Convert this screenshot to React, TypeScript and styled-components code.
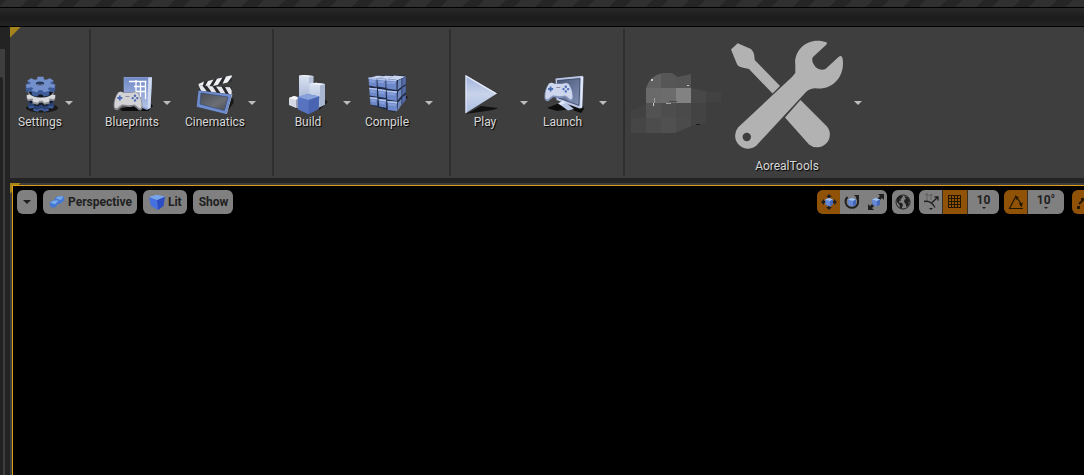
import React from "react";
import styled, { createGlobalStyle, css } from "styled-components";

const GlobalStyle = createGlobalStyle`
  *, *::before, *::after { box-sizing: border-box; }
  body {
    margin: 0;
    background: #232323;
    font-family: Roboto, "Liberation Sans", sans-serif;
    font-size: 12px;
    overflow: hidden;
  }
`;

/* ---------- window frame ---------- */

const Window = styled.div`
  display: flex;
  flex-direction: column;
  height: 100vh;
`;

const HatchStrip = styled.div`
  flex: none;
  height: 8px;
  border-bottom: 1px solid #000;
  background: repeating-linear-gradient(
    135deg,
    #252525 0,
    #252525 4px,
    #303030 5px,
    #303030 19px,
    #252525 20px,
    #252525 26px
  );
`;

const TitleBar = styled.header`
  flex: none;
  height: 19px;
  border-bottom: 1px solid #000;
  background: linear-gradient(#292929, #1b1b1b 55%, #232323);
`;

const Workspace = styled.div`
  flex: 1;
  min-height: 0;
  display: flex;
`;

const SidePanel = styled.aside`
  flex: none;
  display: flex;
  width: 5px;
  margin: 22px 5px 0 0;
  padding: 28px 2px 0 0;
  background: #3e3e3e;
`;

const SidePanelBody = styled.div`
  flex: 1;
  border-top-right-radius: 3px;
  background: #222;
`;

const Main = styled.main`
  flex: 1;
  min-width: 0;
  display: flex;
  flex-direction: column;
  gap: 5px;
`;

/* A folded yellow corner marks a docked panel */
const cornerMark = css`
  background-color: #3e3e3e;
  background-image: linear-gradient(135deg, #a6841c 7px, transparent 8px);
  background-repeat: no-repeat;
`;

/* ---------- toolbar ---------- */

const Toolbar = styled.nav`
  ${cornerMark}
  flex: none;
  display: flex;
  padding: 2px 0;
  overflow: hidden;
`;

const Section = styled.div<{ $lead: number; $gap: number }>`
  flex: none;
  display: flex;
  align-items: center;
  gap: ${(p) => p.$gap}px;
  padding: 2px 15px 2px ${(p) => p.$lead}px;
  & + & { border-left: 2px solid #2e2e2e; }
`;

const Entry = styled.div`
  display: flex;
  align-items: center;
  gap: 2px;
`;

const bareButton = css`
  border: 0;
  padding: 0;
  background: none;
  font: inherit;
  cursor: pointer;
`;

const ToolButton = styled.button<{ $width: number }>`
  ${bareButton}
  display: flex;
  flex-direction: column;
  align-items: center;
  width: ${(p) => p.$width}px;
  color: #d8d8d8;
  line-height: 15px;
  white-space: nowrap;
  text-shadow: 1px 1px 1px #000;
  svg { display: block; flex: none; overflow: visible; }
`;

const MenuButton = styled.button`
  ${bareButton}
  display: flex;
  justify-content: center;
  align-items: center;
  width: 10px;
  height: 40px;
  color: #bdbdbd;
`;

/* ---------- viewport ---------- */

const Viewport = styled.section`
  ${cornerMark}
  flex: 1;
  min-height: 0;
  display: flex;
  padding: 2px 0 0 2px;
`;

const Scene = styled.div`
  flex: 1;
  min-width: 0;
  border: solid #e09c14;
  border-width: 1px 0 0 1px;
  background: #000;
`;

const ViewportBar = styled.div`
  display: flex;
  justify-content: space-between;
  padding: 4px 0 0 4px;
  overflow: hidden;
`;

const LeftTools = styled.div`
  display: flex;
  gap: 6px;
`;

const RightTools = styled.div`
  display: flex;
  gap: 5px;
`;

const Pill = styled.button`
  ${bareButton}
  display: flex;
  align-items: center;
  gap: 3px;
  min-width: 20px;
  height: 24px;
  padding: 0 5px 0 6px;
  border-radius: 6px;
  background: #808080;
  color: #1f1f1f;
  font-weight: 700;
  svg { flex: none; }
`;

const Group = styled.div<{ $gap?: number; $before?: number; $cut?: boolean }>`
  display: flex;
  gap: ${(p) => p.$gap ?? 0}px;
  height: 24px;
  margin-left: ${(p) => p.$before ?? 0}px;
  border-radius: ${(p) => (p.$cut ? "6px 0 0 6px" : "6px")};
  background: #3a3020;
  overflow: hidden;
`;

const GroupButton = styled.button<{ $width: number; $active?: boolean }>`
  ${bareButton}
  display: flex;
  flex-direction: column;
  align-items: center;
  justify-content: center;
  width: ${(p) => p.$width}px;
  background: ${(p) => (p.$active ? "#8f5206" : "#808080")};
  color: #1f1f1f;
  font-weight: 700;
  line-height: 14px;
  svg { display: block; flex: none; }
`;

/* ---------- small glyphs ---------- */

const Caret = () => (
  <svg width="8" height="4" viewBox="0 0 8 4" aria-hidden>
    <path d="M0 0h8L4 4z" fill="currentColor" />
  </svg>
);

const MiniCaret = () => (
  <svg width="6" height="4" viewBox="0 0 6 4" aria-hidden>
    <path d="M1 0h4L3 2z" fill="#1f1f1f" />
  </svg>
);

/* ---------- toolbar icons ---------- */

function gearPath(cx: number, cy: number, rx: number, ry: number, teeth = 7) {
  const step = (Math.PI * 2) / teeth;
  const points: string[] = [];
  for (let i = 0; i < teeth; i++) {
    [
      [-0.34, 0.7],
      [-0.24, 1],
      [0.24, 1],
      [0.34, 0.7],
    ].forEach(([t, r]) => {
      const a = (i + t + 0.25) * step;
      points.push(`${(cx + Math.cos(a) * rx * r).toFixed(2)} ${(cy + Math.sin(a) * ry * r).toFixed(2)}`);
    });
  }
  return `M${points.join("L")}Z`;
}

const SettingsIcon = () => (
  <svg width="40" height="40" viewBox="0 0 40 40" aria-hidden>
    <ellipse cx="22" cy="33" rx="16" ry="4.500" fill="#141414" opacity=".85" />
    {[31, 30, 29, 28, 27].map((y) => (
      <path key={y} d={gearPath(21, y, 13, 6)} fill={y > 29 ? "#3f5e9c" : "#2b4272"} />
    ))}
    <path d={gearPath(21, 26, 12, 5.5)} fill="#131926" />
    {[23, 22, 21, 20].map((y) => (
      <path key={y} d={gearPath(21, y, 14.5, 7)} fill={y > 21 ? "#8f9196" : "#d9dade"} />
    ))}
    <ellipse cx="21" cy="17" rx="12" ry="5.500" fill="#12151c" />
    {[14, 13, 12, 11].map((y) => (
      <path key={y} d={gearPath(20.5, y, 15, 8)} fill="#3f5d98" />
    ))}
    <path d={gearPath(20.5, 9.5, 15, 8)} fill="#7390cc" />
    <ellipse cx="20" cy="8.500" rx="4.200" ry="2" fill="#293957" />
    <path d="M16.500 9.300q3.500 2 7 0" stroke="#8fa9dc" strokeWidth=".7" fill="none" />
  </svg>
);

const Gamepad = ({ light, shade }: { light: string; shade: string }) => (
  <g>
    <path
      d="M5 1.500C6.500 .3 9 .4 10.500 1.600H19C21 .3 24 .6 25.500 2.500C28 6 29.500 11 29.500 16C29.500 20 26 20.500 24 17.500L21 15.200C18 16.200 12.500 16.200 9.800 15L6.500 17.500C4.500 20.500 .7 19.500 .6 15.500C.5 10.500 2 5 5 1.500Z"
      fill={shade}
    />
    <path
      d="M5.500 1.500C7 .5 9 .6 10.500 1.900H19C21 .8 23.500 1 25 2.600C27 5.500 28.500 10 28.600 14.500C28.500 18 26 18.200 24.400 15.600L21.500 13.500C18 14.500 12.500 14.500 9.500 13.300L6 15.500C4 18.200 1.500 17.500 1.500 14.500C1.600 10 2.800 5 5.500 1.500Z"
      fill={light}
    />
    <path d="M6.800 4.500v5M4.300 7h5" stroke="#4c6cb4" strokeWidth="1.800" />
    <g fill="#4c6cb4">
      <circle cx="22" cy="4.800" r="1.200" />
      <circle cx="22" cy="9.400" r="1.200" />
      <circle cx="19.700" cy="7.100" r="1.200" />
      <circle cx="24.300" cy="7.100" r="1.200" />
    </g>
    <path d="M12.500 5.500h4" stroke="#8c919d" strokeWidth="1" />
  </g>
);

const BlueprintsIcon = () => (
  <svg width="40" height="40" viewBox="0 0 40 40" aria-hidden>
    <defs>
      <linearGradient id="sheet" x1="0" y1="0" x2="0" y2="1">
        <stop offset="0" stopColor="#7088c6" />
        <stop offset="1" stopColor="#b3c2e6" />
      </linearGradient>
    </defs>
    <path d="M8 34L36 26L41 31L36 36H10Z" fill="#0d0d0d" />
    <path d="M11.700 2H40L38.500 33L35 35L11.700 25Z" fill="#8ea4d6" />
    <path d="M12.300 2.500H36.300L35.500 33L12.300 25Z" fill="url(#sheet)" />
    <path d="M36.300 2.500H40L38.500 33L35.500 34Z" fill="#cfd9f0" />
    <path
      d="M17 6.500H34.500M33.500 6.500V24M22 11.500H34M24 16.500H34M24 5V19M28.500 6.500V22"
      stroke="#fff"
      strokeWidth="1.300"
      fill="none"
    />
    <g transform="translate(1 16)">
      <Gamepad light="#d3d3d6" shade="#87878b" />
    </g>
  </svg>
);

const CinematicsIcon = () => (
  <svg width="40" height="40" viewBox="0 0 40 40" aria-hidden>
    <defs>
      <linearGradient id="slate" x1="0" y1="0" x2="1" y2="1">
        <stop offset="0" stopColor="#484b52" />
        <stop offset=".6" stopColor="#6c6f76" />
        <stop offset="1" stopColor="#484b50" />
      </linearGradient>
    </defs>
    <path d="M31 38L38.500 28V24L35 22Z" fill="#171717" />
    <path d="M4.500 8L36.500 .2L37 6.500L6 14.500Z" fill="#2c2d31" />
    <path
      d="M3.500 9L9 6.500L7 13.500L5 14.500ZM13 6L18.500 4.600L14 12L9 13.200ZM22 3.800L27.500 2.400L23 9.800L18 11ZM31 1.500L36.500 .2L37 1.500L32.500 7.500L27.500 8.700Z"
      fill="#f0f1f5"
    />
    <path d="M4.500 10.500L36.700 12V19.500L4 15.500Z" fill="#292a2e" />
    <path
      d="M3.500 10L7.500 10.700L12 16.500L6 15.800ZM12 11L17.500 11.200L21.500 17.500L16.500 17ZM21 11.400L26.500 11.700L30.500 18.700L25.500 18.100ZM30 12L35 12.200L36.700 15.500V19.500L34 19.200Z"
      fill="#e6e8ee"
    />
    <path d="M3.500 15.500L36.500 19.500L31 39L1.700 31.700Z" fill="#6e8cd0" />
    <path d="M36.500 19.500L37.500 19L32 38.500L31 39Z" fill="#a9bce6" />
    <path d="M6 18L33 22L29.300 35.500L5 29Z" fill="url(#slate)" stroke="#3a4a70" strokeWidth=".7" />
  </svg>
);

const BuildIcon = () => (
  <svg width="40" height="40" viewBox="0 0 40 40" aria-hidden>
    <defs>
      <linearGradient id="tower" x1="0" y1="0" x2="0" y2="1">
        <stop offset="0" stopColor="#dce4f2" />
        <stop offset="1" stopColor="#a5b4d6" />
      </linearGradient>
    </defs>
    <path d="M30 36L40 27L36 24Z" fill="#1a1a1a" />
    <path d="M11 .5L16 0L25.300 1V25H11Z" fill="url(#tower)" />
    <path d="M21 1.800L25.300 1V25H21Z" fill="#b4c0d8" />
    <path d="M11 .5L16 0L25.300 1L21 1.800Z" fill="#f3f6fb" />
    <path d="M21.300 8.700L28 7.800L37 9V29.500L30 33L21.300 30Z" fill="url(#tower)" />
    <path d="M32 10.200L37 9V29.500L32 32Z" fill="#a9b6d2" />
    <path d="M21.300 8.700L28 7.800L37 9L32 10.200Z" fill="#edf2fa" />
    <path d="M1 23L6 21L11 22.500V31L8 33L1 30Z" fill="#d5dae5" />
    <path d="M1 23L6 21L11 22.500L8 25Z" fill="#f6f7fa" />
    <path d="M8 25L11 23V33H8Z" fill="#9aa2b3" />
    <path d="M9.700 22L20 19L31.300 21.500L30.500 34L20.500 39.300L10 34.500Z" fill="#5873c0" />
    <path d="M9.700 22L20 19L31.300 21.500L20.800 25Z" fill="#86a0dc" />
    <path d="M20.800 25L31.300 21.500L30.500 34L20.500 39.300Z" fill="#4964b0" />
  </svg>
);

const frontCubes = [0, 1, 2].flatMap((row) =>
  [0, 1, 2].map((col) => ({
    x: [1.5, 10.3, 19][col] + row * 0.7,
    y: [2.5, 12.7, 22][row] + col * (0.8 + row * 0.6),
    w: [8.2, 8.2, 10.5][col] - row * 0.4,
    h: [8.6, 8.2, 8][row] + (col === 2 ? 1.4 : 0),
  })),
);

const CompileIcon = () => (
  <svg width="40" height="40" viewBox="0 0 40 40" aria-hidden>
    <path d="M26 38L41 22L37 20Z" fill="#151515" />
    <path d="M2 3L12 .5H38L39 24L26 37L4 30Z" fill="#202c46" />
    <path d="M2 3L10 .7L17 1L11 3.600ZM11.500 3.600L18 .8L26 1L21 4ZM21 4.200L27 .6L38.500 1.500L31 5Z" fill="#c9d5f0" />
    {[0, 1, 2].map((row) => (
      <g key={row}>
        <path d={`M31 ${5.5 + row * 11}L34.500 ${3.7 + row * 10}V${11.7 + row * 9}L30.500 ${15 + row * 10.5}Z`} fill="#7088c0" />
        <path d={`M35.200 ${3.2 + row * 9.5}L38.800 ${1.7 + row * 9}V${9 + row * 8}L35.200 ${11.5 + row * 9}Z`} fill="#536ca9" />
      </g>
    ))}
    {frontCubes.map(({ x, y, w, h }) => (
      <g key={`${x}-${y}`}>
        <path d={`M${x} ${y}L${x + w} ${y + 0.8}V${y + h + 0.8}L${x + 0.5} ${y + h - 0.5}Z`} fill="#6d89cb" />
        <path d={`M${x} ${y}L${x + w} ${y + 0.8}V${y + 2.4}L${x} ${y + 1.5}Z`} fill="#b4c5ec" />
        <path d={`M${x + 1} ${y + 2.5}L${x + w - 1.5} ${y + 3}V${y + 5}L${x + 1} ${y + 4.5}Z`} fill="#88a0d9" />
      </g>
    ))}
  </svg>
);

const PlayIcon = () => (
  <svg width="40" height="40" viewBox="0 0 40 40" aria-hidden>
    <defs>
      <linearGradient id="play" x1="0" y1="0" x2="0" y2="1">
        <stop offset="0" stopColor="#9eafdb" />
        <stop offset=".5" stopColor="#c9d4ea" />
        <stop offset="1" stopColor="#acbce2" />
      </linearGradient>
    </defs>
    <path d="M1 39L16 31L33.500 33L28 35Z" fill="#121212" />
    <path d="M.5 0L32 18.500L.5 38.300Z" fill="url(#play)" />
    <path d="M.5 0L32 18.500L30 18.700L1.500 2V37.700L.5 38.300Z" fill="#e8eefb" />
  </svg>
);

const LaunchIcon = () => (
  <svg width="40" height="40" viewBox="0 0 40 40" aria-hidden>
    <defs>
      <linearGradient id="screen" x1="0" y1="0" x2="1" y2="1">
        <stop offset="0" stopColor="#465373" />
        <stop offset="1" stopColor="#8493b8" />
      </linearGradient>
    </defs>
    <path d="M4 33L14 29L24 30L40 31L41 34L38 38L27 34L14 36Z" fill="#0d0d0d" />
    <path d="M12.500 3.500L39.500 .8L40.500 2L39.300 33L36.500 33.500L13.500 25Z" fill="#b9c6e6" />
    <path d="M14.500 5.500L37 3.500L36 30.500L15 22.800Z" fill="url(#screen)" stroke="#333f5a" strokeWidth=".8" />
    <path d="M38 2L40 1.800L38.800 32.500L37.200 32.700Z" fill="#e3eafa" />
    <path d="M15.300 28.500L20 25.500L31 34L25 35.500Z" fill="#b7c6e4" />
    <path d="M15.300 28.500L20 25.500L23 27.800L18 30Z" fill="#dde6f6" />
    <g transform="translate(.8 7)">
      <Gamepad light="#cdd6ec" shade="#8292ba" />
    </g>
  </svg>
);

const ToolsIcon = () => (
  <svg width="128" height="128" viewBox="0 0 128 128" fill="#b2b2b2" aria-hidden>
    <path d="M8 18.500L14.700 12.300L28 18Q31 21 31.200 24L31.700 29L57 55L49.500 62.500L26 38L19 36.500Q14.500 35.500 13.500 32Z" />
    <path d="M77.500 69L104 95.500A12.800 12.800 0 0 1 86 113.500L62 86.500Z" />
    <path
      fillRule="evenodd"
      d="M104 11.500C86 5 70.500 18 72.300 34.500V42L69 46L15 96.500A13 13 0 0 0 33 115L83 61Q88 56.500 95 57.500C112 58 122.500 43 119.500 27Q118.500 23.500 115.500 26L102.500 38Q98 40 93 36.500Q87.500 30 90 26L103.500 13.500ZM28 106A4.200 4.200 0 1 1 19.600 106A4.200 4.200 0 1 1 28 106Z"
    />
  </svg>
);

/* Pixelated plug-in thumbnail: rows of 15px tiles with a rounded silhouette */
const tiles: [number, number, string][] = [
  [15, 5, "#616161"], [30, 5, "#565656"], [45, 5, "#545454"],
  [15, 20, "#6a6a6a"], [30, 20, "#6c6c6c"], [45, 20, "#828282"], [60, 20, "#484848"],
  [0, 35, "#424242"], [15, 35, "#525252"], [30, 35, "#4d4d4d"], [45, 35, "#4a4a4a"], [60, 35, "#434343"],
  [0, 50, "#464646"], [15, 50, "#4c4c4c"], [30, 50, "#505050"], [45, 50, "#4b4b4b"], [60, 50, "#434343"],
];

const MosaicIcon = () => (
  <svg width="90" height="70" viewBox="0 0 90 70" aria-hidden>
    <defs>
      <clipPath id="blob">
        <path d="M0 43L15 36V20Q19 7 32 5H41L47 9L60 6V20L75 24V56L63 57L44 65H0Z" />
      </clipPath>
    </defs>
    <path d="M60 21Q75 20 78 24H90V34H76L70 50H60Z" fill="#424242" />
    <g clipPath="url(#blob)" shapeRendering="crispEdges">
      {tiles.map(([x, y, fill]) => (
        <rect key={`${x}-${y}`} x={x} y={y} width="15" height="15" fill={fill} />
      ))}
    </g>
    <path d="M20 11h2v2h-2zM56 17h2v1h-2zM22 35h1v3h-1z" fill="#c8c8c8" />
    <path d="M23 30h1v5h-1zM35 35h5v1h-5z" fill="#a0a0a0" />
    <path d="M38 33h8v1h-8z" fill="#484848" />
    <path d="M65 56h4v1h-4z" fill="#1c1c1c" />
  </svg>
);

/* ---------- viewport icons ---------- */

const PerspectiveIcon = () => (
  <svg width="16" height="16" viewBox="0 0 16 16" aria-hidden>
    <path d="M1 8L5 6L7 3L10 2L14.500 2.500L15.500 6L12 9.500L9 10L6 13.500L2 13.500L.8 11Z" fill="#4677d2" />
    <path d="M1 8.500L5 6.500H9.500L6 10.300Z" fill="#7aaeee" />
    <path d="M6.500 4.500L9.500 2.200L14.500 2.500L12 6Z" fill="#74a8ec" />
  </svg>
);

const LitIcon = () => (
  <svg width="16" height="16" viewBox="0 0 16 16" aria-hidden>
    <path d="M0 3L8 6L9 16L2 12Z" fill="#4470e2" />
    <path d="M8 6L16 2.500L14.500 12L9 16Z" fill="#2b4cc4" />
    <path d="M0 3L7.500 .8L16 2.500L8 6Z" fill="#78a6ee" />
  </svg>
);

const Cube = ({ x, y }: { x: number; y: number }) => (
  <g transform={`translate(${x} ${y})`}>
    <path d="M0 1.500L4 0L8 1.500V6.500L5 8.500L.5 7Z" fill="#6288d6" />
    <path d="M0 1.500L4 0L8 1.500L5 3Z" fill="#a3c0f0" />
    <path d="M5 3L8 1.500V6.500L5 8.500Z" fill="#4768b8" />
  </g>
);

const MoveIcon = () => (
  <svg width="16" height="16" viewBox="0 0 16 16" aria-hidden>
    <path
      d="M8 0L11 3H9V5H7V3H5ZM8 16L5 13H7V11H9V13H11ZM0 8L3 5V7H5V9H3V11ZM16 8L13 11V9H11V7H13V5Z"
      fill="#1f1f1f"
    />
    <Cube x={4} y={4} />
  </svg>
);

const RotateIcon = () => (
  <svg width="16" height="16" viewBox="0 0 16 16" aria-hidden>
    <path d="M3.500 3A6.300 6.300 0 1 0 12.500 3.300" fill="none" stroke="#1f1f1f" strokeWidth="2" />
    <path d="M10 1H15V6Z" fill="#1f1f1f" />
    <Cube x={4} y={4} />
  </svg>
);

const ScaleIcon = () => (
  <svg width="16" height="16" viewBox="0 0 16 16" aria-hidden>
    <path d="M10 0H16V6L14 4L11 7L9 5L12 2ZM0 10L2 12L5 9L7 11L4 14L6 16H0Z" fill="#1f1f1f" />
    <Cube x={4} y={4} />
  </svg>
);

const GlobeIcon = () => (
  <svg width="16" height="16" viewBox="0 0 16 16" aria-hidden>
    <circle cx="8" cy="8" r="7" fill="none" stroke="#1f1f1f" strokeWidth="1" />
    <path
      d="M2 4L5 1.500L8 2L7 4L5.500 5L6 7L4.500 6.500L4 8.500L7 9L8 11L6.500 14.500L5 14L4.500 11L2 8ZM9.500 2L13 3.500L15 7.500L13.500 8L14 11L11.500 13L10.500 9.500L9 8L9.500 5.500L11.500 5L10 4Z"
      fill="#1f1f1f"
    />
  </svg>
);

const SurfaceSnapIcon = () => (
  <svg width="16" height="20" viewBox="0 0 16 20" aria-hidden>
    <path d="M4 9V1.500M2.500 3.500L4 1.500L5.500 3.500M8 8V2.500M6.500 4L8 2L9.500 4" fill="none" stroke="#5e5e5e" />
    <path d="M1 9.500Q8 8 12 15.500M9 10.500L15 5M11.500 5H15V8.500" fill="none" stroke="#1f1f1f" strokeWidth="1.300" />
    <path d="M6 16h4L8 18z" fill="#1f1f1f" />
  </svg>
);

const GridIcon = () => (
  <svg width="14" height="14" viewBox="0 0 14 14" aria-hidden>
    <path
      d="M.5 0V13M3.500 0V13M6.500 0V13M9.500 0V13M12.500 0V13M0 .5H13M0 3.500H13M0 6.500H13M0 9.500H13M0 12.500H13"
      fill="none"
      stroke="#251802"
    />
  </svg>
);

const AngleIcon = () => (
  <svg width="16" height="16" viewBox="0 0 16 16" aria-hidden>
    <path d="M8 2L1.500 14.500H15" fill="none" stroke="#251802" strokeWidth="1.200" />
    <path d="M8.500 4Q12.500 7 13 12" fill="none" stroke="#251802" strokeWidth="1.200" />
    <path d="M7 1L11 3.500L8 6ZM10.800 9.500L15 8.500L13.500 13.500Z" fill="#251802" />
  </svg>
);

const ScaleSnapIcon = () => (
  <svg width="12" height="16" viewBox="0 0 12 16" aria-hidden>
    <path d="M5 12h3v3H5z" fill="#251802" />
    <path d="M7 10L12 5M9 5h3" stroke="#251802" strokeWidth="2" />
  </svg>
);

/* ---------- page ---------- */

type ToolProps = { label: string; width: number; icon: React.ReactNode };

const Tool = ({ label, width, icon }: ToolProps) => (
  <Entry>
    <ToolButton $width={width} type="button">
      {icon}
      {label}
    </ToolButton>
    <MenuButton type="button" aria-label={`${label} options`}>
      <Caret />
    </MenuButton>
  </Entry>
);

export default function App() {
  return (
    <Window>
      <GlobalStyle />
      <HatchStrip />
      <TitleBar />
      <Workspace>
        <SidePanel>
          <SidePanelBody />
        </SidePanel>
        <Main>
          <Toolbar aria-label="Level editor">
            <Section $lead={8} $gap={0}>
              <Tool label="Settings" width={44} icon={<SettingsIcon />} />
            </Section>
            <Section $lead={13} $gap={13}>
              <Tool label="Blueprints" width={56} icon={<BlueprintsIcon />} />
              <Tool label="Cinematics" width={60} icon={<CinematicsIcon />} />
            </Section>
            <Section $lead={2} $gap={0}>
              <Tool label="Build" width={64} icon={<BuildIcon />} />
              <Tool label="Compile" width={70} icon={<CompileIcon />} />
            </Section>
            <Section $lead={2} $gap={0}>
              <Tool label="Play" width={64} icon={<PlayIcon />} />
              <Tool label="Launch" width={67} icon={<LaunchIcon />} />
            </Section>
            <Section $lead={6} $gap={2}>
              <ToolButton $width={90} type="button" aria-label="Plug-in">
                <MosaicIcon />
              </ToolButton>
              <Tool label="AorealTools" width={128} icon={<ToolsIcon />} />
            </Section>
          </Toolbar>
          <Viewport aria-label="Viewport">
            <Scene>
              <ViewportBar>
                <LeftTools>
                  <Pill type="button" aria-label="Viewport options">
                    <Caret />
                  </Pill>
                  <Pill type="button">
                    <PerspectiveIcon />
                    Perspective
                  </Pill>
                  <Pill type="button">
                    <LitIcon />
                    Lit
                  </Pill>
                  <Pill type="button">Show</Pill>
                </LeftTools>
                <RightTools>
                  <Group>
                    <GroupButton type="button" $width={23} $active aria-label="Move">
                      <MoveIcon />
                    </GroupButton>
                    <GroupButton type="button" $width={24} aria-label="Rotate">
                      <RotateIcon />
                    </GroupButton>
                    <GroupButton type="button" $width={23} aria-label="Scale">
                      <ScaleIcon />
                    </GroupButton>
                  </Group>
                  <Group>
                    <GroupButton type="button" $width={22} aria-label="World space">
                      <GlobeIcon />
                    </GroupButton>
                  </Group>
                  <Group $gap={1}>
                    <GroupButton type="button" $width={23} aria-label="Surface snapping">
                      <SurfaceSnapIcon />
                    </GroupButton>
                    <GroupButton type="button" $width={24} $active aria-label="Grid snapping">
                      <GridIcon />
                    </GroupButton>
                    <GroupButton type="button" $width={31}>
                      10
                      <MiniCaret />
                    </GroupButton>
                  </Group>
                  <Group $gap={1}>
                    <GroupButton type="button" $width={23} $active aria-label="Rotation snapping">
                      <AngleIcon />
                    </GroupButton>
                    <GroupButton type="button" $width={36}>
                      10°
                      <MiniCaret />
                    </GroupButton>
                  </Group>
                  <Group $before={3} $cut>
                    <GroupButton type="button" $width={12} $active aria-label="Scale snapping">
                      <ScaleSnapIcon />
                    </GroupButton>
                  </Group>
                </RightTools>
              </ViewportBar>
            </Scene>
          </Viewport>
        </Main>
      </Workspace>
    </Window>
  );
}
